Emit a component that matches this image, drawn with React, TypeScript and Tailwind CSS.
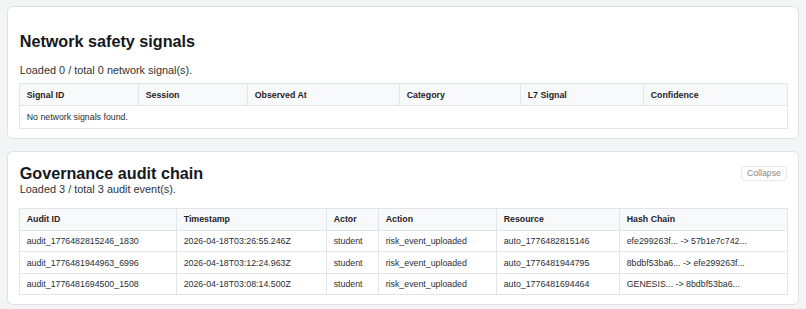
import React from 'react';

type AuditRow = {
  id: string;
  timestamp: string;
  actor: string;
  action: string;
  resource: string;
  hash: string;
};

const signalColumns = [
  { label: 'Signal ID', width: 'w-[119px]' },
  { label: 'Session', width: 'w-[109px]' },
  { label: 'Observed At', width: 'w-[152px]' },
  { label: 'Category', width: 'w-[121px]' },
  { label: 'L7 Signal', width: 'w-[123px]' },
  { label: 'Confidence', width: 'w-[144px]' },
];

const auditColumns = [
  { label: 'Audit ID', width: 'w-[157px]' },
  { label: 'Timestamp', width: 'w-[150px]' },
  { label: 'Actor', width: 'w-[52px]' },
  { label: 'Action', width: 'w-[118px]' },
  { label: 'Resource', width: 'w-[123px]' },
  { label: 'Hash Chain', width: 'w-[168px]' },
];

const auditRows: AuditRow[] = [
  {
    id: 'audit_1776482815246_1830',
    timestamp: '2026-04-18T03:26:55.246Z',
    actor: 'student',
    action: 'risk_event_uploaded',
    resource: 'auto_1776482815146',
    hash: 'efe299263f... -> 57b1e7c742...',
  },
  {
    id: 'audit_1776481944963_6996',
    timestamp: '2026-04-18T03:12:24.963Z',
    actor: 'student',
    action: 'risk_event_uploaded',
    resource: 'auto_1776481944795',
    hash: '8bdbf53ba6... -> efe299263f...',
  },
  {
    id: 'audit_1776481694500_1508',
    timestamp: '2026-04-18T03:08:14.500Z',
    actor: 'student',
    action: 'risk_event_uploaded',
    resource: 'auto_1776481694464',
    hash: 'GENESIS... -> 8bdbf53ba6...',
  },
];

const cellClass = 'border border-[#e3e5e8] px-[7px] py-[5.3px] text-left align-middle leading-[10px]';

const TableHead: React.FC<{ columns: { label: string; width: string }[] }> = ({ columns }) => (
  <thead>
    <tr className="bg-[#f8f9fa]">
      {columns.map((col) => (
        <th key={col.label} className={`${cellClass} ${col.width} font-bold text-[#1f2328]`}>
          {col.label}
        </th>
      ))}
    </tr>
  </thead>
);

const App: React.FC = () => {
  return (
    <div className="min-h-[309px] bg-[#f3f4f6] px-[7px] pt-[6px] pb-[6px] font-['Liberation_Sans',Arial,sans-serif] text-[#1f2328]">
      <div className="flex flex-col gap-[12px]">
        <section className="rounded-[6px] border border-[#dfe1e5] bg-white px-[10.7px] pt-[10.7px] pb-[9.5px]">
          <h2 className="mt-[13.3px] pl-[1px] text-[16.2px] font-bold leading-[20px] text-[#15181d]">Network safety signals</h2>
          <p className="mt-[12.6px] pl-[1px] text-[10.9px] leading-[12px] text-[#2f3337]">Loaded 0 / total 0 network signal(s).</p>
          <table className="mt-[7.7px] w-full table-fixed border-collapse border border-[#e3e5e8] text-[8.8px]">
            <TableHead columns={signalColumns} />
            <tbody>
              <tr>
                <td colSpan={6} className={`${cellClass} py-[6px] text-[#2a2e33]`}>
                  No network signals found.
                </td>
              </tr>
            </tbody>
          </table>
        </section>

        <section className="rounded-[6px] border border-[#dfe1e5] bg-white px-[10.7px] pt-[10.7px] pb-[8.5px]">
          <div className="flex h-[20px] items-center justify-between">
            <h2 className="pl-[1px] text-[16.2px] font-bold leading-[20px] text-[#15181d]">Governance audit chain</h2>
            <button
              type="button"
              className="mr-[0.5px] h-[15px] rounded-[4px] border border-[#e6e8eb] bg-white px-[5px] text-[8.7px] leading-[13px] text-[#858a91]"
            >
              Collapse
            </button>
          </div>
          <p className="pl-[1px] text-[10.9px] leading-[12px] text-[#2f3337]">Loaded 3 / total 3 audit event(s).</p>
          <table className="mt-[13px] w-full table-fixed border-collapse border border-[#e3e5e8] text-[8.8px]">
            <TableHead columns={auditColumns} />
            <tbody>
              {auditRows.map((row) => (
                <tr key={row.id} className="text-[#2a2e33]">
                  <td className={cellClass}>{row.id}</td>
                  <td className={cellClass}>{row.timestamp}</td>
                  <td className={cellClass}>{row.actor}</td>
                  <td className={cellClass}>{row.action}</td>
                  <td className={cellClass}>{row.resource}</td>
                  <td className={cellClass}>{row.hash}</td>
                </tr>
              ))}
            </tbody>
          </table>
        </section>
      </div>
    </div>
  );
};

export default App;
